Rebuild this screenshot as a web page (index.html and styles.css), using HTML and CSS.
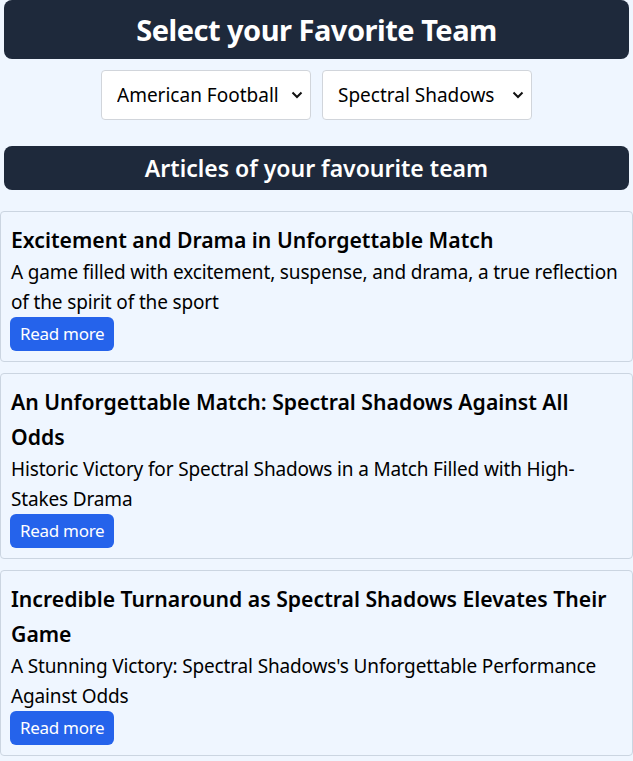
FILE: index.html
```html
<!DOCTYPE html>
<html>
<head>
<meta charset="utf-8">
<link rel="stylesheet" href="styles.css">
</head>
<body>
<header class="banner banner-main"><h1>Select your Favorite Team</h1></header>
<div class="selects">
  <div class="select-wrap">
    <select class="select"><option>American Football</option></select>
    <svg class="chev" width="12" height="8" viewBox="0 0 12 8"><path d="M1.5 1.5 L6 6 L10.5 1.5" fill="none" stroke="#111" stroke-width="2"/></svg>
  </div>
  <div class="select-wrap">
    <select class="select"><option>Spectral Shadows</option></select>
    <svg class="chev" width="12" height="8" viewBox="0 0 12 8"><path d="M1.5 1.5 L6 6 L10.5 1.5" fill="none" stroke="#111" stroke-width="2"/></svg>
  </div>
</div>
<header class="banner banner-sub"><h2>Articles of your favourite team</h2></header>
<div class="articles">
  <article class="card">
    <h3>Excitement and Drama in Unforgettable Match</h3>
    <p>A game filled with excitement, suspense, and drama, a true reflection of the spirit of the sport</p>
    <a class="btn" href="#">Read more</a>
  </article>
  <article class="card">
    <h3>An Unforgettable Match: Spectral Shadows Against All Odds</h3>
    <p>Historic Victory for Spectral Shadows in a Match Filled with High-Stakes Drama</p>
    <a class="btn" href="#">Read more</a>
  </article>
  <article class="card">
    <h3>Incredible Turnaround as Spectral Shadows Elevates Their Game</h3>
    <p>A Stunning Victory: Spectral Shadows's Unforgettable Performance Against Odds</p>
    <a class="btn" href="#">Read more</a>
  </article>
</div>
</body>
</html>
```
FILE: styles.css
```css
* { box-sizing: border-box; }
body {
  margin: 0;
  background: #eff6ff;
  font-family: "Noto Sans", "Open Sans", sans-serif;
  color: #000;
}
.banner {
  margin: 0 4px;
  background: #1e293b;
  color: #fff;
  border-radius: 8px;
  display: flex;
  align-items: center;
  justify-content: center;
}
.banner h1, .banner h2 { margin: 0; }
.banner-main { height: 59px; }
.banner-main h1 { font-size: 29px; font-weight: 700; letter-spacing: -0.5px; }
.banner-sub { height: 44px; margin-top: 26px; }
.banner-sub h2 { font-size: 23px; font-weight: 600; }
.selects {
  display: flex;
  justify-content: center;
  gap: 11px;
  margin-top: 11px;
}
.select-wrap { position: relative; }
.select {
  appearance: none;
  -webkit-appearance: none;
  width: 210px;
  height: 50px;
  background: #fff;
  border: 1px solid #d1d5db;
  border-radius: 4px;
  font-family: inherit;
  font-size: 19px;
  color: #000;
  padding: 0 0 0 15px;
}
.chev {
  position: absolute;
  right: 8px;
  top: 21px;
  pointer-events: none;
}
.articles {
  margin-top: 21px;
  display: flex;
  flex-direction: column;
  gap: 11px;
}
.card {
  border: 1px solid #cbd5e1;
  border-radius: 4px;
  padding: 10px 10px 10px 9px;
}
.card h3 {
  margin: 0;
  font-size: 21.2px;
  font-weight: 600;
  line-height: 35px;
  padding-left: 1px;
}
.card p {
  margin: 0;
  font-size: 19px;
  line-height: 30px;
  letter-spacing: -0.15px;
  padding-left: 1px;
}
.btn {
  display: inline-block;
  background: #2563eb;
  color: #fff;
  text-decoration: none;
  font-size: 17px;
  line-height: 34px;
  height: 34px;
  padding: 0 10px;
  border-radius: 6px;
  vertical-align: top;
  letter-spacing: -0.3px;
}
```
